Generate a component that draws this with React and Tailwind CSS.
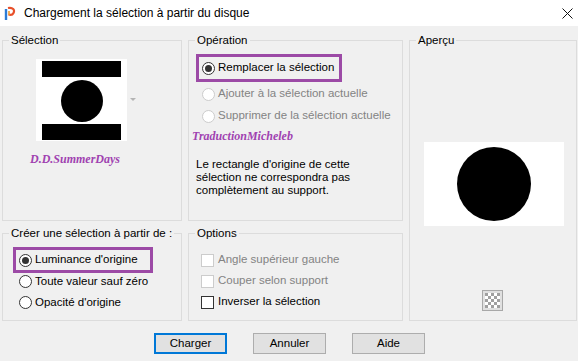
import React from "react";

function Radio({ checked, disabled }) {
  return (
    <span
      className={
        "w-[13px] h-[13px] rounded-full border bg-white flex items-center justify-center shrink-0 " +
        (disabled ? "border-[#cccccc]" : "border-[#333333]")
      }
    >
      {checked && <span className="w-[7px] h-[7px] rounded-full bg-[#333333]" />}
    </span>
  );
}

function Check({ disabled }) {
  return (
    <span
      className={
        "w-[13px] h-[13px] border bg-white shrink-0 " +
        (disabled ? "border-[#cccccc]" : "border-[#333333]")
      }
    />
  );
}

function Group({ title, className = "", children }) {
  return (
    <fieldset className={"border border-[#dcdcdc] min-w-0 " + className}>
      <legend className="ml-[6px] px-[2px] leading-[16px] whitespace-nowrap">{title}</legend>
      {children}
    </fieldset>
  );
}

export default function App() {
  return (
    <div className="w-[578px] h-[361px] bg-[#f0f0f0] text-[11.5px] text-black overflow-hidden whitespace-nowrap font-['Liberation_Sans',sans-serif]">
      <div className="h-[26px] bg-white flex items-center">
        <svg width="12" height="15" viewBox="0 0 12 15" className="ml-[4px]">
          <path d="M2 3 L2 14" stroke="#2b7bd6" strokeWidth="2.4" />
          <path d="M4 2 C9 1 11 4 9.5 7 C8.5 9 6 9 4.5 8.5" stroke="#e8502a" strokeWidth="2.2" fill="none" />
          <path d="M5 5 L5 9" stroke="#f29a2e" strokeWidth="1.6" />
        </svg>
        <span className="ml-[8px] text-[12px] leading-none">Chargement la sélection à partir du disque</span>
        <svg width="11" height="11" viewBox="0 0 11 11" className="ml-auto mr-[5px] mt-[1px]">
          <path d="M0.5 0.5 L10.5 10.5 M10.5 0.5 L0.5 10.5" stroke="#111" strokeWidth="1" />
        </svg>
      </div>

      <div className="grid grid-cols-[180px_215px_168px] grid-rows-[189px_96px] gap-x-[6px] gap-y-[4px] pl-[2px] pt-[6px]">
        <Group title="Sélection">
          <div className="flex items-center mt-[11px] ml-[33px]">
            <svg width="91" height="82" viewBox="0 0 91 82" className="block">
              <rect width="91" height="82" fill="#fff" />
              <rect x="6" y="2" width="79" height="16" fill="#000" />
              <rect x="6" y="65" width="79" height="16" fill="#000" />
              <circle cx="46" cy="42" r="21" fill="#000" />
            </svg>
            <svg width="6" height="4" viewBox="0 0 6 4" className="ml-[3px]">
              <path d="M0 0 L6 0 L3 3 Z" fill="#b4b4b4" />
            </svg>
          </div>
          <div className="mt-[10px] ml-[27px] text-[12px] leading-[16px] font-bold italic text-[#a042b0] font-['Liberation_Serif',serif]">
            D.D.SummerDays
          </div>
        </Group>

        <Group title="Opération">
          <div className="mt-[6px] ml-[7px] w-[146px] h-[28px] border-[3px] border-[#9c4aa6] flex items-center gap-[3px] pl-[3px]">
            <Radio checked />
            <span>Remplacer la sélection</span>
          </div>
          <div className="flex items-center gap-[3px] ml-[13px] mt-[3px] h-[18px] text-[#838383]">
            <Radio disabled />
            <span>Ajouter à la sélection actuelle</span>
          </div>
          <div className="flex items-center gap-[3px] ml-[13px] mt-[4px] h-[18px] text-[#838383]">
            <Radio disabled />
            <span>Supprimer de la sélection actuelle</span>
          </div>
          <div className="ml-[3px] mt-[3px] text-[12px] leading-[16px] font-bold italic text-[#a042b0] font-['Liberation_Serif',serif]">
            TraductionMicheleb
          </div>
          <p className="ml-[7px] mt-[14px] leading-[13px]">
            Le rectangle d'origine de cette
            <br />
            sélection ne correspondra pas
            <br />
            complètement au support.
          </p>
        </Group>

        <Group title="Aperçu" className="row-span-2 flex flex-col">
          <div className="mt-[94px] ml-[14px] w-[140px] h-[84px] bg-white">
            <svg width="140" height="84" viewBox="0 0 140 84" className="block">
              <circle cx="70" cy="42" r="37" fill="#000" />
            </svg>
          </div>
          <div className="mt-[64px] ml-[72px] w-[21px] h-[21px] border border-[#a8a8a8] bg-[#e0e0e0] p-[2px]">
            <svg width="15" height="15" viewBox="0 0 15 15" className="block">
              <rect width="15" height="15" fill="#fff" />
              {[0, 1, 2, 3, 4].map((r) =>
                [0, 1, 2, 3, 4].map((c) =>
                  (r + c) % 2 === 0 ? (
                    <rect key={r + "-" + c} x={c * 3} y={r * 3} width="3" height="3" fill="#a0a0a0" />
                  ) : null
                )
              )}
            </svg>
          </div>
        </Group>

        <Group title="Créer une sélection à partir de :">
          <div className="mt-[6px] ml-[10px] w-[140px] h-[26px] border-[3px] border-[#9c4aa6] flex items-center gap-[3px] pl-[3px]">
            <Radio checked />
            <span>Luminance d'origine</span>
          </div>
          <div className="flex items-center gap-[3px] ml-[16px] -mt-[2px] h-[21px]">
            <Radio />
            <span>Toute valeur sauf zéro</span>
          </div>
          <div className="flex items-center gap-[3px] ml-[16px] h-[21px]">
            <Radio />
            <span>Opacité d'origine</span>
          </div>
        </Group>

        <Group title="Options">
          <div className="flex items-center gap-[4px] ml-[12px] mt-[10px] h-[18px] text-[#838383]">
            <Check disabled />
            <span>Angle supérieur gauche</span>
          </div>
          <div className="flex items-center gap-[4px] ml-[12px] mt-[3px] h-[18px] text-[#838383]">
            <Check disabled />
            <span>Couper selon support</span>
          </div>
          <div className="flex items-center gap-[4px] ml-[12px] mt-[3px] h-[18px]">
            <Check />
            <span>Inverser la sélection</span>
          </div>
        </Group>
      </div>

      <div className="flex justify-center gap-[26px] mt-[12px] pl-[1px]">
        <button className="w-[73px] h-[21px] bg-[#e1e1e1] border-2 border-[#0078d7] leading-none">Charger</button>
        <button className="w-[73px] h-[21px] bg-[#e1e1e1] border border-[#adadad] leading-none">Annuler</button>
        <button className="w-[73px] h-[21px] bg-[#e1e1e1] border border-[#adadad] leading-none">Aide</button>
      </div>
    </div>
  );
}
